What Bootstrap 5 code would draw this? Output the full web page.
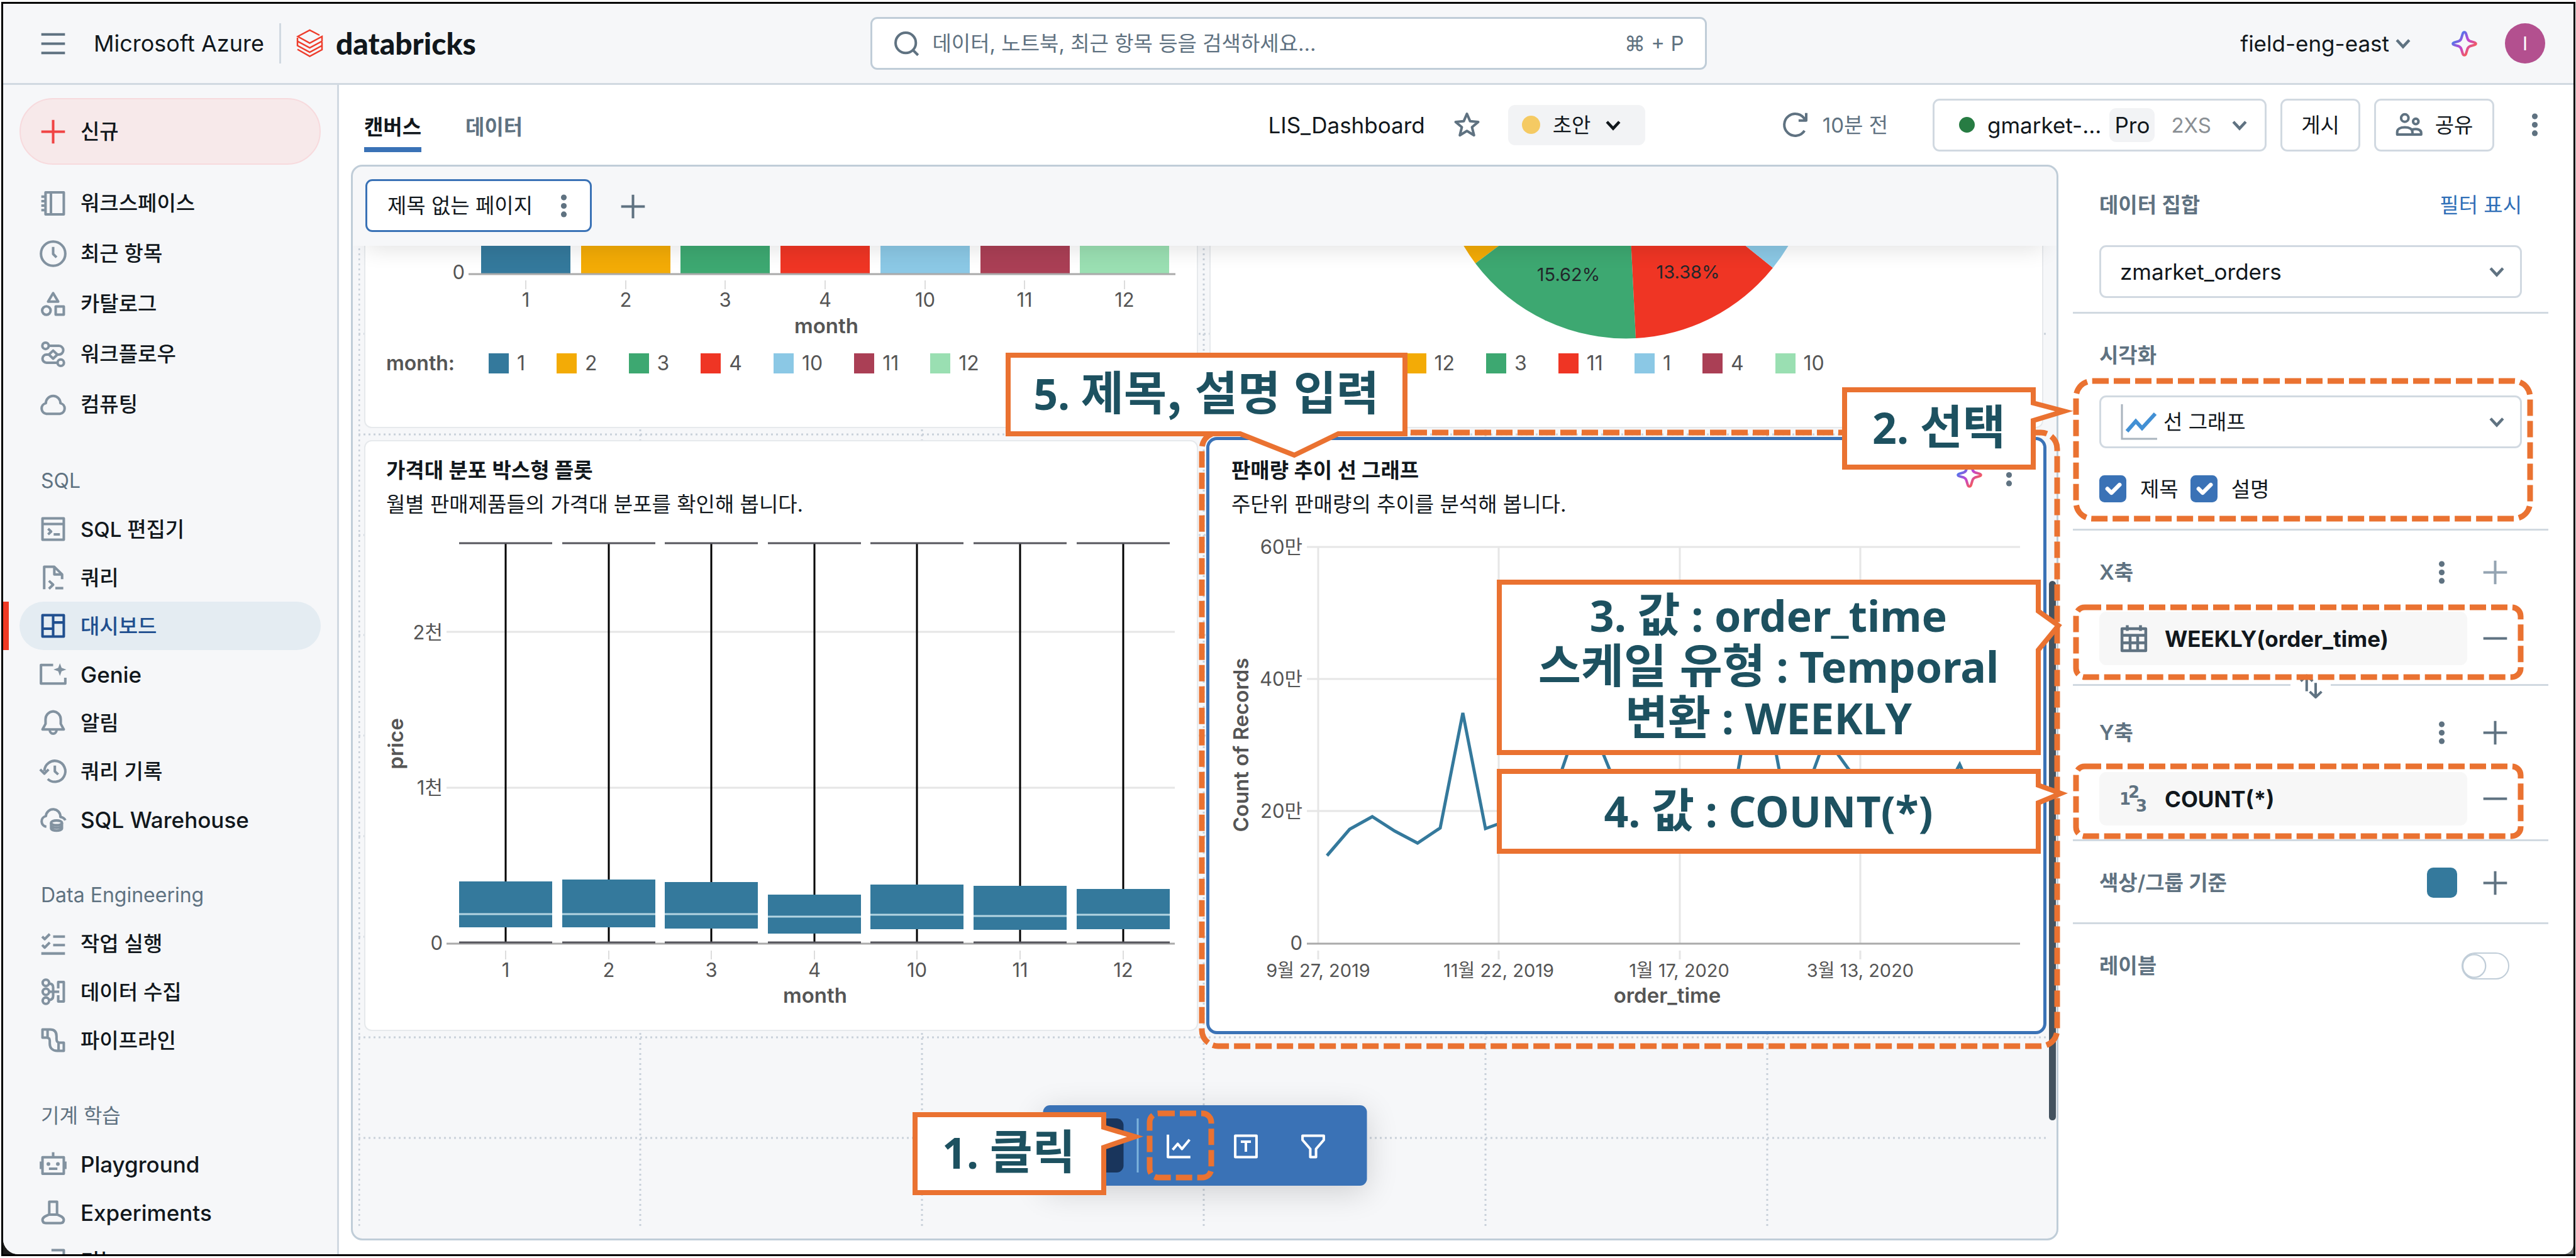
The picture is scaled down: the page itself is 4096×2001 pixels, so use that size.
<!DOCTYPE html>
<html lang="ko">
<head>
<meta charset="utf-8">
<meta name="viewport" content="width=device-width, initial-scale=1">
<title>LIS_Dashboard - Databricks</title>
<link href="https://cdn.jsdelivr.net/npm/bootstrap@5.3.0/dist/css/bootstrap.min.css" rel="stylesheet">
<style>
:root{--ink:#11171c;--mute:#5f7281;--line:#d1d9e1;--edge:#c0cdd8;--soft:#f6f7f9;--blue:#3a72b6;--orange:#ea7231}
body{font-family:Inter,"Noto Sans CJK KR",sans-serif;font-size:33px;line-height:42px;color:var(--ink);background:#fff;height:100vh;padding:3px 1px 3px 2px;overflow:hidden}
button{font:inherit;color:inherit;background:none;border:0;padding:0}
a{color:inherit;text-decoration:none}
.frame-win{height:100%;border:3px solid #000;background:linear-gradient(90deg,#1c1c1c 0 60px,#777 60px)}
.frame-in{height:100%;background:#fff;border-radius:0 0 16px 24px;overflow:hidden}
.ic{width:43px;height:43px;flex:none;fill:none;stroke:currentColor;stroke-width:1.5;stroke-linejoin:round;overflow:visible}
.ic .solid{fill:currentColor;stroke:none}
.muted{color:var(--mute)}
.lat{font-size:35px}
/* top bar */
.top-nav{height:129px;flex:none;background:var(--soft);border-bottom:3px solid var(--line);padding:0 45px}
.top-nav .side{flex:1 1 0}
.menu-btn{margin-left:13px}
.top-nav .vr-line{width:3px;height:64px;background:var(--line);margin:0 24px}
.brand-host{font-size:36px;margin-left:43px}
.wordmark{font-family:Lato,sans-serif;font-weight:900;font-size:48px;line-height:60px;margin-left:20px}
.searchbox{width:1330px;height:84px;border:3px solid var(--edge);border-radius:11px;background:#fff;padding:0 33px;gap:20px}
.searchbox input{border:0;outline:0;flex:1;background:none;color:var(--mute);padding:0;min-width:0}
.searchbox input::placeholder{color:var(--mute);opacity:1}
.avatar-i{width:64px;height:64px;border-radius:50%;background:#b3508f;color:#fff;font-size:30px}
/* side bar */
.side-nav{width:534px;flex:none;background:var(--soft);border-right:3px solid var(--line);padding:21px 26px 0;overflow:hidden}
.new-btn{width:100%;height:106px;border:2px solid #f7dadd;background:#f7e9ea;border-radius:53px;padding-left:30px;gap:22px;font-weight:500;margin-bottom:21px}
.new-btn .ic{color:#f04444}
.nav-row{height:77px;border-radius:39px;padding-left:32px;gap:22px;font-weight:500;position:relative}
.first-set .nav-row{height:80px}
.nav-row .ic{color:#8292a0}
.nav-row.on{background:#e4ecf2;color:#204f8f}
.nav-row.on .ic{color:#204f8f}
.nav-row.on::before{content:"";position:absolute;left:-26px;top:0;bottom:0;width:9px;background:#f03a24}
.nav-head{margin:43px 0 0;padding-left:34px;height:77px;line-height:77px;font-size:32px;font-weight:400;color:var(--mute)}
/* dashboard bar */
.dash-bar{height:127px;padding:0 40px;flex:none}
.view-tab{font-weight:600;color:var(--mute);height:86px;line-height:64px;margin-right:70px;border-bottom:8px solid transparent;padding-top:14px;box-sizing:border-box}
.view-tab.on{color:var(--ink);border-color:var(--blue)}
.state-pill{width:218px;height:64px;background:#f2f3f5;border-radius:11px;gap:20px;padding-left:22px;margin:0 217px 0 44px}
.spot{width:29px;height:29px;border-radius:50%;background:#f5ca63}
.spot.live{width:25px;height:25px;background:#277c43}
.outline-btn{height:84px;border:3px solid var(--line);border-radius:11px;background:#fff;margin-left:22px}
.tier{background:#f2f3f5;border-radius:11px;height:54px;line-height:54px;padding:0 8px}
.chev{width:32px;height:32px;fill:none;stroke:var(--mute);stroke-width:1.7;flex:none}
/* canvas */
.board{margin:0 0 22px 19px;border:3px solid var(--edge);border-radius:18px;background:var(--soft);overflow:hidden;flex:1;min-width:0;position:relative}
.page-strip{height:126px;flex:none;padding:20px 20px 0;gap:44px}
.page-tab{width:360px;height:84px;border:3px solid var(--blue);border-radius:11px;background:#fff;padding:0 20px 0 32px}
.stage{flex:1;min-height:0;position:relative;overflow:hidden;padding:0 12px 0 9px}
.stage::before{content:"";position:absolute;left:20px;right:20px;top:-30px;height:30px;box-shadow:0 0 38px rgba(0,0,0,.16);z-index:2}
.stage .rule-grid{position:absolute;left:9px;top:-20px;width:calc(100% - 21px);height:1584px;stroke:#c9d1da;stroke-width:3;stroke-dasharray:3 5}
.widgets{display:grid;grid-template-columns:1fr 1fr;position:relative}
.tile{background:#fff;border:2px solid #e6e9ec;border-radius:12px;margin:9px 9px 10px}
.tile.cut{border-top:0;border-radius:0 0 12px 12px;margin-top:0;height:290px}
.tile.tall{height:940px;padding-top:19px}
.tile.picked{border-color:#fff;box-shadow:0 0 0 5px var(--blue)}
.tile svg.plot{display:block;width:100%;height:auto;font-size:31px;fill:#555}
.plot .ttl{font-weight:600;font-size:33px}
.plot .fine{font-size:29px}
.tile h2,.tile p{font-size:33px;line-height:54px;margin:0 33px;font-weight:600}
.tile p{font-weight:400}
.tile-acts{gap:20px;padding:13px 31px 0 0;height:54px}
.key-row{height:70px;padding-left:33px;gap:50px;font-size:32px;color:#555}
.key-row b{margin-right:4px}
.key-row span{gap:13px}
.key-row i{width:32px;height:32px}
.scroll-thumb{position:absolute;right:1px;top:659px;width:11px;height:858px;border-radius:6px;background:#43525f;z-index:3}
.tool-dock{position:absolute;left:50%;bottom:84px;transform:translateX(-50%);height:128px;background:var(--blue);border-radius:11px;padding:0 42px;gap:21px;color:#fff;box-shadow:0 10px 50px rgba(0,0,0,.16);z-index:4}
.tool-dock button{width:86px;height:86px;border-radius:11px}
.tool-dock button.on{background:#19355c}
.tool-dock b{width:3px;height:86px;background:#7db3dd}
/* settings */
.conf{width:819px;flex:none;padding:0 40px 0 23px}
.conf section{border-top:3px solid var(--line);padding:24px 42px 21px}
.conf section:first-child{border-top:0;padding-top:22px;padding-bottom:22px}
.conf .bar{height:84px}
.conf h3,.conf .cap{font-size:33px;line-height:42px;margin:0;font-weight:600;color:var(--mute)}
.pick{height:84px;border:3px solid var(--line);border-radius:11px;font:inherit;color:inherit;padding:0 30px;width:100%;background-color:#fff;appearance:none}
.pick.lat{font-size:35px}
.pick.with-ic{padding-left:99px}
.pick-wrap{position:relative;margin-top:22px}
.pick-wrap .chev{position:absolute;right:24px;top:26px}
.pick-wrap .lead-ic{position:absolute;left:34px;top:14px;width:58px;height:58px}
.ticks{margin-top:43px;gap:22px}
.ticks label+input{margin-left:-3px}
.ticks input{width:43px;height:43px;margin:0;border-radius:10px;border:0}
.ticks input:checked{background-color:var(--blue)}
.field{gap:23px;margin-top:21px}
.field div{flex:1;height:85px;background:#f7f7f7;border-radius:11px;gap:25px;padding-left:31px;font-weight:700;font-size:35px}
.field div .ic{width:48px;height:48px;color:var(--mute)}
.digits{font-family:"DejaVu Sans",sans-serif;font-size:26px;font-weight:700}
.acts{gap:42px;padding-right:21px;color:var(--mute)}
.acts .ic,.field button .ic{display:block}
.field button{width:43px;margin-right:21px;color:var(--mute)}
.tint{width:48px;height:48px;border-radius:10px;background:#34799c}
.swap{position:absolute;left:50%;top:-24px;transform:translateX(-50%);width:64px;height:48px;background:#fff;color:var(--mute)}
.toggle.form-check-input{width:76px;height:43px;margin:0 20px 0 0;border:2px solid var(--edge);background-image:url("data:image/svg+xml,%3csvg xmlns='http://www.w3.org/2000/svg' viewBox='0 0 43 43'%3e%3ccircle cx='20' cy='21.500' r='20' fill='white' stroke='%23c0cdd8' stroke-width='2.500'/%3e%3c/svg%3e")}
/* guide marks */
.guide{position:absolute;left:0;top:0;width:100%;height:100%;z-index:10;pointer-events:none}
.guide .dash{fill:none;stroke:var(--orange);stroke-width:9;stroke-dasharray:26 8}
.guide .bub{fill:#fff;stroke:var(--orange);stroke-width:8}
.guide text{font-family:"Noto Sans","Noto Sans CJK KR",sans-serif;font-weight:700;font-size:68px;fill:#1d5160;text-anchor:middle}
.guide .k{font-family:"Noto Sans CJK KR",sans-serif;font-size:74px}
</style>
</head>
<body class="position-relative">
<svg width="0" height="0" class="position-absolute" aria-hidden="true">
<defs>
<linearGradient id="spk" x1="0" y1="0" x2="1" y2="1"><stop offset=".15" stop-color="#3d7df0"/><stop offset=".5" stop-color="#c046d0"/><stop offset=".85" stop-color="#ff5f46"/></linearGradient>
<symbol id="plus" viewBox="0 0 16 16"><path d="M8 1v14M1 8h14"/></symbol>
<symbol id="minus" viewBox="0 0 16 16"><path d="M1 8h14"/></symbol>
<symbol id="dots" viewBox="0 0 16 16"><g fill="currentColor" stroke="none"><circle cx="8" cy="3" r="1.700"/><circle cx="8" cy="8" r="1.700"/><circle cx="8" cy="13" r="1.700"/></g></symbol>
<symbol id="spark" viewBox="0 0 16 16"><path stroke="url(#spk)" d="M8 1.200Q8.700 1.200 9 2.200L9.800 4.800Q10.200 6.100 11.300 6.500L13.800 7.200Q14.800 7.500 14.800 8T13.800 8.800L11.300 9.500Q10.200 9.900 9.800 11.200L9 13.800Q8.700 14.800 8 14.800T7 13.800L6.200 11.200Q5.800 9.900 4.700 9.500L2.200 8.800Q1.200 8.500 1.200 8T2.200 7.200L4.700 6.500Q5.800 6.100 6.200 4.800L7 2.200Q7.300 1.200 8 1.200Z"/></symbol>
<symbol id="chev" viewBox="0 0 12 12"><path d="m2.300 4 3.700 4 3.700-4"/></symbol>
</defs>
</svg>
<div class="frame-win">
<div class="frame-in d-flex flex-column">
<header class="top-nav d-flex align-items-center">
  <div class="side d-flex align-items-center">
    <button class="menu-btn muted" aria-label="메뉴"><svg class="ic d-block" viewBox="0 0 16 16"><path d="M1 2.500h14M1 8h14M1 13.500h14" /></svg></button>
    <span class="brand-host">Microsoft Azure</span><span class="vr-line"></span>
    <svg width="43" height="46" viewBox="0 0 43 46" fill="none" stroke="#ee3d2c" stroke-width="2.500"><path d="M37 10 21.500 2 2.500 12 21.500 22.500 41 12V19.500L21.500 30 2 19.500V14M2 19.500V26.500L21.500 37 41 26.500V21M41 26.500 21.500 37M2 32.500 21.500 43.500 41 33V26.500"/></svg>
    <span class="wordmark">databricks</span>
  </div>
  <label class="searchbox d-flex align-items-center">
    <svg class="ic muted" viewBox="0 0 16 16"><circle cx="7.500" cy="7.500" r="6"/><path d="m11.800 11.800 3 3"/></svg>
    <input type="text" placeholder="데이터, 노트북, 최근 항목 등을 검색하세요..." aria-label="검색">
    <span class="muted">⌘ + P</span>
  </label>
  <div class="side d-flex align-items-center justify-content-end">
    <button class="d-flex align-items-center lat" style="gap:6px">field-eng-east <svg class="chev"><use href="#chev"/></svg></button>
    <button aria-label="Assistant" style="margin:0 43px 0 60px"><svg class="ic d-block"><use href="#spark"/></svg></button>
    <button class="avatar-i d-flex align-items-center justify-content-center">I</button>
  </div>
</header>
<div class="d-flex flex-grow-1" style="min-height:0">
<nav class="side-nav">
  <button class="new-btn d-flex align-items-center"><svg class="ic"><use href="#plus"/></svg>신규</button>
  <div class="first-set">
  <a href="#" class="nav-row d-flex align-items-center"><svg class="ic" viewBox="0 0 16 16"><path d="M3.500 1.500h10.800v13H3.500zM6.700 1.500v13M1 4h2.500M1 6.700h2.500M1 9.300h2.500M1 12h2.500"/></svg>워크스페이스</a>
  <a href="#" class="nav-row d-flex align-items-center"><svg class="ic" viewBox="0 0 16 16"><circle cx="8" cy="8" r="7.200"/><path d="M8 4v4.200l2 2"/></svg>최근 항목</a>
  <a href="#" class="nav-row d-flex align-items-center"><svg class="ic" viewBox="0 0 16 16"><path d="m8 1.600 3 5H5zM9.500 9.500h4.800v4.800H9.500z"/><circle cx="4" cy="11.900" r="2.500"/></svg>카탈로그</a>
  <a href="#" class="nav-row d-flex align-items-center"><svg class="ic" viewBox="0 0 16 16"><circle cx="3.500" cy="3" r="1.900"/><circle cx="12.500" cy="13" r="1.900"/><path d="M5.400 3h6a2.500 2.500 0 0 1 0 5.200h-1M10.600 13h-6.500a2.400 2.400 0 0 1 0-4.800h1.200M8 5.800 10.500 8.200 8 10.600 5.500 8.200z"/></svg>워크플로우</a>
  <a href="#" class="nav-row d-flex align-items-center"><svg class="ic" viewBox="0 0 16 16"><path d="M4 13.500a3.200 3.200 0 0 1-.3-6.300 4.300 4.300 0 0 1 8.600 0 3.200 3.200 0 0 1-.3 6.300z"/></svg>컴퓨팅</a>
  </div>
  <h6 class="nav-head">SQL</h6>
  <a href="#" class="nav-row d-flex align-items-center"><svg class="ic" viewBox="0 0 16 16"><path d="M1.700 1.700h12.600v12.600H1.700zM1.700 5h12.600M5 7.800l1.800 1.700L5 11.200M8.300 11.200H12"/></svg>SQL 편집기</a>
  <a href="#" class="nav-row d-flex align-items-center"><svg class="ic" viewBox="0 0 16 16"><path d="M2.700 15V1.700h6l4.600 4.500V9M8.700 1.700v4.500h4.600M5.500 10l2.500 2.300L5.500 14.700M9.300 14.300H14"/></svg>쿼리</a>
  <a href="#" class="nav-row on d-flex align-items-center"><svg class="ic" viewBox="0 0 16 16"><path d="M1.700 1.700h12.600v12.600H1.700zM8 1.700v12.600M8 6h6.300M1.700 9.700H8"/></svg>대시보드</a>
  <a href="#" class="nav-row lat d-flex align-items-center"><svg class="ic" viewBox="0 0 16 16"><path d="M8 2.500H.8v11h14.400V10"/><path class="solid" d="m12 1.500 1 2.700 2.800 1-2.800 1L12 9l-1-2.800-2.800-1 2.800-1z"/></svg>Genie</a>
  <a href="#" class="nav-row d-flex align-items-center"><svg class="ic" viewBox="0 0 16 16"><path d="M8 1.300A4.700 4.700 0 0 0 3.500 6v2.700L1.700 12h12.600l-1.800-3.300V6A4.700 4.700 0 0 0 8 1.300zM6 12.500a2 2 0 0 0 4 0"/></svg>알림</a>
  <a href="#" class="nav-row d-flex align-items-center"><svg class="ic" viewBox="0 0 16 16"><path d="M2.800 8a6.200 6.200 0 1 1 2 4.700M9 4.700v3.500l2 1.800M.3 7l2.500 2.500L5.300 7"/></svg>쿼리 기록</a>
  <a href="#" class="nav-row lat d-flex align-items-center"><svg class="ic" viewBox="0 0 16 16"><path d="M4 12.300A3.200 3.200 0 0 1 3.700 6 4.300 4.300 0 0 1 12.300 6.500Q14.500 6.800 15.200 8.500"/><ellipse cx="10" cy="10" rx="3.200" ry="1.400"/><path d="M6.800 10v3.200c0 1.900 6.400 1.900 6.400 0V10M6.800 11.700c0 1.600 6.400 1.600 6.400 0"/></svg>SQL Warehouse</a>
  <h6 class="nav-head">Data Engineering</h6>
  <a href="#" class="nav-row d-flex align-items-center"><svg class="ic" viewBox="0 0 16 16"><path d="m1.500 4 1.500 1.500L6 2.500M1.500 9 3 10.500 6 7.500M8 4h7M8 9h7M1 14h14"/></svg>작업 실행</a>
  <a href="#" class="nav-row d-flex align-items-center"><svg class="ic" viewBox="0 0 16 16"><circle cx="3.700" cy="2.700" r="1.900"/><circle cx="3.700" cy="8" r="1.900"/><circle cx="3.700" cy="13.300" r="1.900"/><path d="M5.600 3.200c1.700 0 2.400 1 2.400 2.300v5c0 1.300-.7 2.300-2.400 2.300M5.600 8h6M11 6V2.200h3.300v11.600H11V10"/></svg>데이터 수집</a>
  <a href="#" class="nav-row d-flex align-items-center"><svg class="ic" viewBox="0 0 16 16"><path d="M1.700 1.700h4.500c2.600 0 3.800 1.500 3.800 4v1.500c0 1.600.5 2.300 1.800 2.300h2.500v4.800h-3.800C7.700 14.300 6 12.700 6 10V8.300C6 7 5.300 6.500 4.200 6.500H1.700zM4.700 1.700v4.800M11.200 9.500v4.800"/></svg>파이프라인</a>
  <h6 class="nav-head">기계 학습</h6>
  <a href="#" class="nav-row lat d-flex align-items-center"><svg class="ic" viewBox="0 0 16 16"><path d="M1.700 4h12.600v9.800H1.700zM8 1v3M.8 6.500v4.500M15.200 6.500v4.500M5.500 10.800h5"/><circle class="solid" cx="5.200" cy="8" r="1.100"/><circle class="solid" cx="10.800" cy="8" r="1.100"/></svg>Playground</a>
  <a href="#" class="nav-row lat d-flex align-items-center"><svg class="ic" viewBox="0 0 16 16"><path d="M5.700 1.700h4.600v7.500c2 .8 4 1.500 4 3.200 0 1.300-.8 1.900-2 1.900H3.700c-1.200 0-2-.6-2-1.900 0-1.700 2-2.400 4-3.200zM5.500 9.300h5"/></svg>Experiments</a>
  <a href="#" class="nav-row d-flex align-items-center"><svg class="ic" viewBox="0 0 16 16"><path d="M7 1.700h7.300v8M1.700 6h8v8h-8z"/></svg>기능</a>
</nav>
<main class="d-flex flex-column flex-grow-1" style="min-width:0">
  <div class="dash-bar d-flex align-items-center">
    <a href="#" class="view-tab on">캔버스</a><a href="#" class="view-tab">데이터</a>
    <span class="ms-auto lat">LIS_Dashboard</span>
    <button aria-label="즐겨찾기" style="margin-left:45px"><svg class="ic d-block muted" viewBox="0 0 16 16"><path d="m8 1.500 1.900 4.400 4.800.4-3.700 3.100 1.200 4.800L8 11.600l-4.200 2.600L5 9.400 1.300 6.300l4.800-.4z"/></svg></button>
    <button class="state-pill d-flex align-items-center"><i class="spot"></i>초안<svg class="chev" style="stroke:#11171c"><use href="#chev"/></svg></button>
    <svg class="ic muted" viewBox="0 0 16 16"><path d="M13.500 11.500A6.500 6.500 0 1 1 13.800 5M14.500 1v4.500H10"/></svg>
    <span class="muted" style="margin:0 49px 0 22px">10분 전</span>
    <button class="outline-btn d-flex align-items-center" style="width:531px;padding:0 24px 0 39px"><i class="spot live"></i><span class="lat" style="margin:0 13px 0 20px">gmarket-...</span><span class="tier lat">Pro</span><span style="margin-left:26px;color:#8a8f94">2XS</span><svg class="chev ms-auto"><use href="#chev"/></svg></button>
    <button class="outline-btn" style="width:127px">게시</button>
    <button class="outline-btn d-flex align-items-center justify-content-center" style="width:191px;gap:20px"><svg class="ic muted" viewBox="0 0 16 16"><circle cx="5.500" cy="4" r="2.200"/><circle cx="12" cy="6" r="1.600"/><path d="M1 13.800v-1.500c0-1.800 1.800-2.800 4.500-2.800s4.500 1 4.500 2.800v1.500zM10 10.800c3-.8 5.200.3 5.200 2v1H10"/></svg>공유</button>
    <button aria-label="더 보기" class="muted" style="margin-left:43px"><svg class="ic d-block"><use href="#dots"/></svg></button>
  </div>
  <div class="d-flex flex-grow-1" style="min-height:0">
    <div class="board d-flex flex-column">
      <div class="page-strip d-flex">
        <div class="page-tab d-flex align-items-center justify-content-between">제목 없는 페이지<button class="muted" aria-label="페이지 메뉴"><svg class="ic d-block"><use href="#dots"/></svg></button></div>
        <button class="muted" aria-label="페이지 추가" style="height:84px"><svg class="ic"><use href="#plus"/></svg></button>
      </div>
      <div class="stage">
        <svg class="rule-grid"><path d="M0 160H2690M0 320H2690M0 480H2690M0 639H2690M0 799H2690M0 959H2690M0 1119H2690M0 1279H2690M0 1439H2690"/><line x1="1" x2="1" y1="0" y2="100%"/><line x1="16.667%" x2="16.667%" y1="0" y2="100%"/><line x1="33.333%" x2="33.333%" y1="0" y2="100%"/><line x1="50%" x2="50%" y1="0" y2="100%"/><line x1="66.667%" x2="66.667%" y1="0" y2="100%"/><line x1="83.333%" x2="83.333%" y1="0" y2="100%"/></svg>
        <div class="widgets">
          <div class="tile cut">
            <svg class="plot" viewBox="582 392 1322 152">
              <g><path fill="#34799c" d="M766 392h142v44H766z"/><path fill="#f3ab06" d="M925 392h142v44H925z"/><path fill="#3da871" d="M1083 392h142v44h-142z"/><path fill="#ef3524" d="M1242 392h142v44h-142z"/><path fill="#8bc8e5" d="M1401 392h142v44h-142z"/><path fill="#aa3f55" d="M1560 392h142v44h-142z"/><path fill="#9adfb2" d="M1718 392h142v44h-142z"/></g>
              <path stroke="#aaa" stroke-width="3" d="M746 437H1870"/>
              <path stroke="#ddd" stroke-width="2" d="M837 447v14M996 447v14M1154 447v14M1313 447v14M1472 447v14M1630 447v14M1789 447v14"/>
              <text x="740" y="445" text-anchor="end">0</text>
              <g text-anchor="middle"><text x="837" y="489">1</text><text x="996" y="489">2</text><text x="1154" y="489">3</text><text x="1313" y="489">4</text><text x="1472" y="489">10</text><text x="1630" y="489">11</text><text x="1789" y="489">12</text><text class="ttl" x="1315" y="531">month</text></g>
            </svg>
            <div class="key-row d-flex align-items-center"><b class="fw-semibold">month:</b><span class="d-flex align-items-center"><i style="background:#34799c"></i>1</span><span class="d-flex align-items-center"><i style="background:#f3ab06"></i>2</span><span class="d-flex align-items-center"><i style="background:#3da871"></i>3</span><span class="d-flex align-items-center"><i style="background:#ef3524"></i>4</span><span class="d-flex align-items-center"><i style="background:#8bc8e5"></i>10</span><span class="d-flex align-items-center"><i style="background:#aa3f55"></i>11</span><span class="d-flex align-items-center"><i style="background:#9adfb2"></i>12</span></div>
          </div>
          <div class="tile cut">
            <svg class="plot" viewBox="1926 392 1322 152">
              <path fill="#f3ab06" d="M2587 239 2287 239A300 300 0 0 0 2347 420Z"/>
              <path fill="#3da871" d="M2587 239 2347 420A300 300 0 0 0 2602 539Z"/>
              <path fill="#ef3524" d="M2587 239 2602 539A300 300 0 0 0 2820 427Z"/>
              <path fill="#8bc8e5" d="M2587 239 2820 427A300 300 0 0 0 2887 239Z"/>
              <g class="fine" text-anchor="middle" fill="#22272b"><text x="2495" y="448">15.62%</text><text x="2685" y="444">13.38%</text></g>
            </svg>
            <div class="key-row d-flex align-items-center"><b class="fw-semibold">month:</b><span class="d-flex align-items-center"><i style="background:#34799c"></i>2</span><span class="d-flex align-items-center"><i style="background:#f3ab06"></i>12</span><span class="d-flex align-items-center"><i style="background:#3da871"></i>3</span><span class="d-flex align-items-center"><i style="background:#ef3524"></i>11</span><span class="d-flex align-items-center"><i style="background:#8bc8e5"></i>1</span><span class="d-flex align-items-center"><i style="background:#aa3f55"></i>4</span><span class="d-flex align-items-center"><i style="background:#9adfb2"></i>10</span></div>
          </div>
          <div class="tile tall">
            <h2>가격대 분포 박스형 플롯</h2>
            <p>월별 판매제품들의 가격대 분포를 확인해 봅니다.</p>
            <svg class="plot" viewBox="582 830 1322 809">
              <path stroke="#e6e6e6" stroke-width="3" d="M711 1006H1869M711 1254H1869"/>
              <path stroke="#aaa" stroke-width="3" d="M711 1502H1869"/>
              <path stroke="#ddd" stroke-width="2" d="M805 1513v14M969 1513v14M1132 1513v14M1296 1513v14M1459 1513v14M1623 1513v14M1787 1513v14"/>
              <path stroke="#000" stroke-width="3" d="M805 865V1500M969 865V1500M1132 865V1500M1296 865V1500M1459 865V1500M1623 865V1500M1787 865V1500"/>
              <path stroke="#55555c" stroke-width="3" d="M731 865h148M895 865h148M1058 865h148M1222 865h148M1385 865h148M1549 865h148M1713 865h148M731 1500h148M895 1500h148M1058 1500h148M1222 1500h148M1385 1500h148M1549 1500h148M1713 1500h148"/>
              <path fill="#34799c" d="M731 1403h148v73H731zM895 1400h148v76H895zM1058 1404h148v74h-148zM1222 1424h148v62h-148zM1385 1408h148v71h-148zM1549 1410h148v70h-148zM1713 1415h148v64h-148z"/>
              <path stroke="#b4d5e2" stroke-width="3" d="M731 1455h148M895 1455h148M1058 1455h148M1222 1459h148M1385 1456h148M1549 1458h148M1713 1456h148"/>
              <g text-anchor="end"><text x="705" y="1018">2천</text><text x="705" y="1265">1천</text><text x="705" y="1512">0</text></g>
              <g text-anchor="middle"><text x="805" y="1555">1</text><text x="969" y="1555">2</text><text x="1132" y="1555">3</text><text x="1296" y="1555">4</text><text x="1459" y="1555">10</text><text x="1623" y="1555">11</text><text x="1787" y="1555">12</text><text class="ttl" x="1297" y="1596">month</text><text class="ttl" transform="translate(642 1184) rotate(-90)">price</text></g>
            </svg>
          </div>
          <div class="tile tall picked">
            <div class="d-flex"><h2 class="flex-grow-1">판매량 추이 선 그래프</h2><div class="tile-acts d-flex"><svg class="ic"><use href="#spark"/></svg><svg class="ic muted"><use href="#dots"/></svg></div></div>
            <p>주단위 판매량의 추이를 분석해 봅니다.</p>
            <svg class="plot" viewBox="1926 830 1322 809">
              <path stroke="#e6e6e6" stroke-width="3" d="M2079 871H3213M2079 1081H3213M2079 1291H3213M2097 871V1501M2384 871V1501M2672 871V1501M2959 871V1501M2097 1513v14M2384 1513v14M2672 1513v14M2959 1513v14"/>
              <path stroke="#aaa" stroke-width="3" d="M2079 1502H3213"/>
              <polyline fill="none" stroke="#34799c" stroke-width="5" points="2111,1362 2147,1320 2183,1300 2219,1323 2255,1342 2291,1318 2327,1135 2363,1319 2399,1306 2435,1300 2472,1262 2508,1157 2544,1185 2580,1273 2616,1290 2652,1310 2688,1300 2724,1290 2760,1254 2796,1043 2832,1236 2868,1272 2904,1174 2940,1224 2976,1265 3012,1290 3048,1300 3084,1278 3117,1217 3150,1290"/>
              <g text-anchor="end"><text x="2072" y="882">60만</text><text x="2072" y="1092">40만</text><text x="2072" y="1302">20만</text><text x="2072" y="1512">0</text></g>
              <g text-anchor="middle"><g class="fine"><text x="2097" y="1555">9월 27, 2019</text><text x="2384" y="1555">11월 22, 2019</text><text x="2671" y="1555">1월 17, 2020</text><text x="2959" y="1555">3월 13, 2020</text></g><text class="ttl" x="2652" y="1596">order_time</text><text class="ttl" transform="translate(1986 1186) rotate(-90)">Count of Records</text></g>
            </svg>
          </div>
        </div>
      </div>
      <div class="scroll-thumb"></div>
      <div class="tool-dock d-flex align-items-center">
        <button class="on" aria-label="선택"><svg class="ic" viewBox="0 0 16 16"><path d="m3 2 10 5-4.500 1.500L7 13z"/></svg></button><b></b>
        <button aria-label="시각화 추가"><svg class="ic" viewBox="0 0 16 16"><path d="M1.700 1v13.300H15M4.500 10l3-3.500 2.500 3 4.500-5.500"/></svg></button>
        <button aria-label="텍스트 추가"><svg class="ic" viewBox="0 0 16 16"><path d="M1.700 1.700h12.600v12.600H1.700zM5 5.200h6M8 5.200v6"/></svg></button>
        <button aria-label="필터 추가"><svg class="ic" viewBox="0 0 16 16"><path d="M1.700 1.700h12.600v2.500L9.700 9.500v4.800H6.300V9.500L1.700 4.200z"/></svg></button>
      </div>
    </div>
    <aside class="conf">
      <section>
        <div class="bar d-flex align-items-center justify-content-between"><label class="cap" for="ds">데이터 집합</label><a href="#" style="color:#2f6fb7">필터 표시</a></div>
        <div class="pick-wrap"><select class="pick lat" id="ds"><option>zmarket_orders</option></select><svg class="chev"><use href="#chev"/></svg></div>
      </section>
      <section style="padding-bottom:42px">
        <div class="bar d-flex align-items-center"><label class="cap" for="viz">시각화</label></div>
        <div class="pick-wrap"><select class="pick with-ic" id="viz"><option>선 그래프</option></select><svg class="lead-ic" viewBox="0 0 58 58" fill="none"><path d="M2 0v55H58" stroke="#a9b4be" stroke-width="3"/><path d="m10 43 14-16 10 11L55 15" stroke="#4290d4" stroke-width="6"/></svg><svg class="chev"><use href="#chev"/></svg></div>
        <div class="ticks d-flex align-items-center"><input class="form-check-input" type="checkbox" checked id="t1"><label for="t1">제목</label><input class="form-check-input" type="checkbox" checked id="t2"><label for="t2">설명</label></div>
      </section>
      <section style="padding-bottom:30px">
        <div class="bar d-flex align-items-center justify-content-between"><h3>X축</h3><div class="acts d-flex"><button aria-label="X축 메뉴"><svg class="ic"><use href="#dots"/></svg></button><button aria-label="X축 추가" style="color:#94a4b2"><svg class="ic"><use href="#plus"/></svg></button></div></div>
        <div class="field d-flex align-items-center"><div class="d-flex align-items-center"><svg class="ic" viewBox="0 0 16 16"><path d="M1.700 2.700h12.600v11.600H1.700zM4.500.8v3M11.500.8v3M1.700 6.200h12.600M1.700 10.200h12.600M6 6.200v8M10 6.200v8"/></svg>WEEKLY(order_time)</div><button aria-label="제거"><svg class="ic"><use href="#minus"/></svg></button></div>
      </section>
      <section class="position-relative" style="padding-top:32px;padding-bottom:22px">
        <button class="swap" aria-label="축 바꾸기"><svg class="ic d-block mx-auto" viewBox="0 0 16 16"><path d="M5.500 11V2M2 5l3.500-3.300L9 5M10.800 6v8M7.300 11.200l3.500 3.300 3.500-3.300"/></svg></button>
        <div class="bar d-flex align-items-center justify-content-between"><h3>Y축</h3><div class="acts d-flex"><button aria-label="Y축 메뉴"><svg class="ic"><use href="#dots"/></svg></button><button aria-label="Y축 추가"><svg class="ic"><use href="#plus"/></svg></button></div></div>
        <div class="field d-flex align-items-center"><div class="d-flex align-items-center"><svg class="ic digits" viewBox="0 0 48 48"><g class="solid"><text x="1" y="33">1</text><text x="15" y="22">2</text><text x="27" y="44">3</text></g></svg>COUNT(*)</div><button aria-label="제거"><svg class="ic"><use href="#minus"/></svg></button></div>
      </section>
      <section>
        <div class="bar d-flex align-items-center justify-content-between"><h3>색상/그룹 기준</h3><div class="acts d-flex align-items-center" style="gap:39px"><button class="tint" aria-label="색상"></button><button aria-label="색상 추가"><svg class="ic"><use href="#plus"/></svg></button></div></div>
      </section>
      <section>
        <div class="bar d-flex align-items-center justify-content-between form-switch p-0"><label class="cap" for="lb">레이블</label><input class="form-check-input toggle" type="checkbox" role="switch" id="lb"></div>
      </section>
    </aside>
  </div>
</main>
</div>
</div>
</div>
<svg class="guide" viewBox="0 0 4096 2001">
  <g class="dash">
    <rect x="1911" y="688" width="1360" height="976" rx="26"/>
    <rect x="3301" y="606" width="722" height="219" rx="26"/>
    <rect x="3301" y="966" width="707" height="111" rx="14"/>
    <rect x="3301" y="1219" width="707" height="111" rx="14"/>
    <rect x="1828" y="1771" width="98" height="102" rx="14"/>
  </g>
  <path class="bub" d="M1455 1773H1755V1793L1805 1808 1755 1825V1897H1455Z"/>
  <path class="bub" d="M2933 620H3233V641L3282 654 3233 669V743H2933Z"/>
  <path class="bub" d="M2384 926H3241V972L3273 995 3241 1034V1197H2384Z"/>
  <path class="bub" d="M2384 1227H3241V1249L3277 1262 3241 1277V1354H2384Z"/>
  <path class="bub" d="M1603 565H2234V690H2128L2058 724 1972 690H1603Z"/>
  <text x="1604" y="1859">1. <tspan class="k">클릭</tspan></text>
  <text x="3083" y="706">2. <tspan class="k">선택</tspan></text>
  <text x="2812" y="1005">3. <tspan class="k">값</tspan> : order_time</text>
  <text x="2812" y="1086"><tspan class="k">스케일 유형</tspan> : Temporal</text>
  <text x="2812" y="1168"><tspan class="k">변환</tspan> : WEEKLY</text>
  <text x="2812" y="1316">4. <tspan class="k">값</tspan> : COUNT(*)</text>
  <text x="1918" y="652">5. <tspan class="k">제목, 설명 입력</tspan></text>
</svg>
<script src="https://cdn.jsdelivr.net/npm/bootstrap@5.3.0/dist/js/bootstrap.bundle.min.js"></script>
</body>
</html>
